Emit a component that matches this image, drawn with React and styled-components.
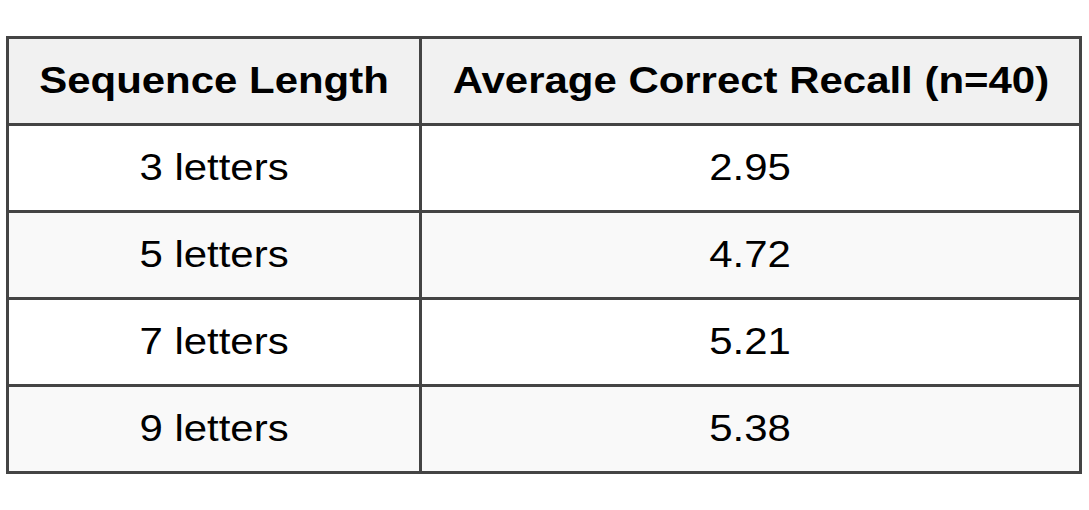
import React from 'react';
import styled, { createGlobalStyle } from 'styled-components';

const GlobalStyle = createGlobalStyle`
  body {
    margin: 0;
    background: #ffffff;
    font-family: "Liberation Sans", Arial, sans-serif;
  }
`;

const Page = styled.div`
  padding: 36px 0 0 6px;
`;

const Table = styled.div`
  display: grid;
  grid-template-columns: 410px 657px;
  grid-auto-rows: 84px;
  gap: 3px;
  padding: 3px;
  width: max-content;
  background: #444444;
`;

const Cell = styled.div`
  display: flex;
  align-items: center;
  justify-content: center;
  font-size: 36px;
  color: #000000;
  font-weight: ${(p) => (p.$head ? 700 : 400)};
  background: ${(p) => (p.$head ? '#f1f1f1' : p.$alt ? '#f9f9f9' : '#ffffff')};
`;

// the source text is drawn wider than its height suggests
const Label = styled.span`
  display: inline-block;
  white-space: nowrap;
  transform: scaleX(1.165);
`;

const rows = [
  ['3 letters', '2.95'],
  ['5 letters', '4.72'],
  ['7 letters', '5.21'],
  ['9 letters', '5.38'],
];

export default function App() {
  return (
    <Page>
      <GlobalStyle />
      <Table>
        <Cell $head><Label>Sequence Length</Label></Cell>
        <Cell $head><Label>Average Correct Recall (n=40)</Label></Cell>
        {rows.map(([len, avg], i) => (
          <React.Fragment key={len}>
            <Cell $alt={i % 2 === 1}><Label>{len}</Label></Cell>
            <Cell $alt={i % 2 === 1}><Label>{avg}</Label></Cell>
          </React.Fragment>
        ))}
      </Table>
    </Page>
  );
}
